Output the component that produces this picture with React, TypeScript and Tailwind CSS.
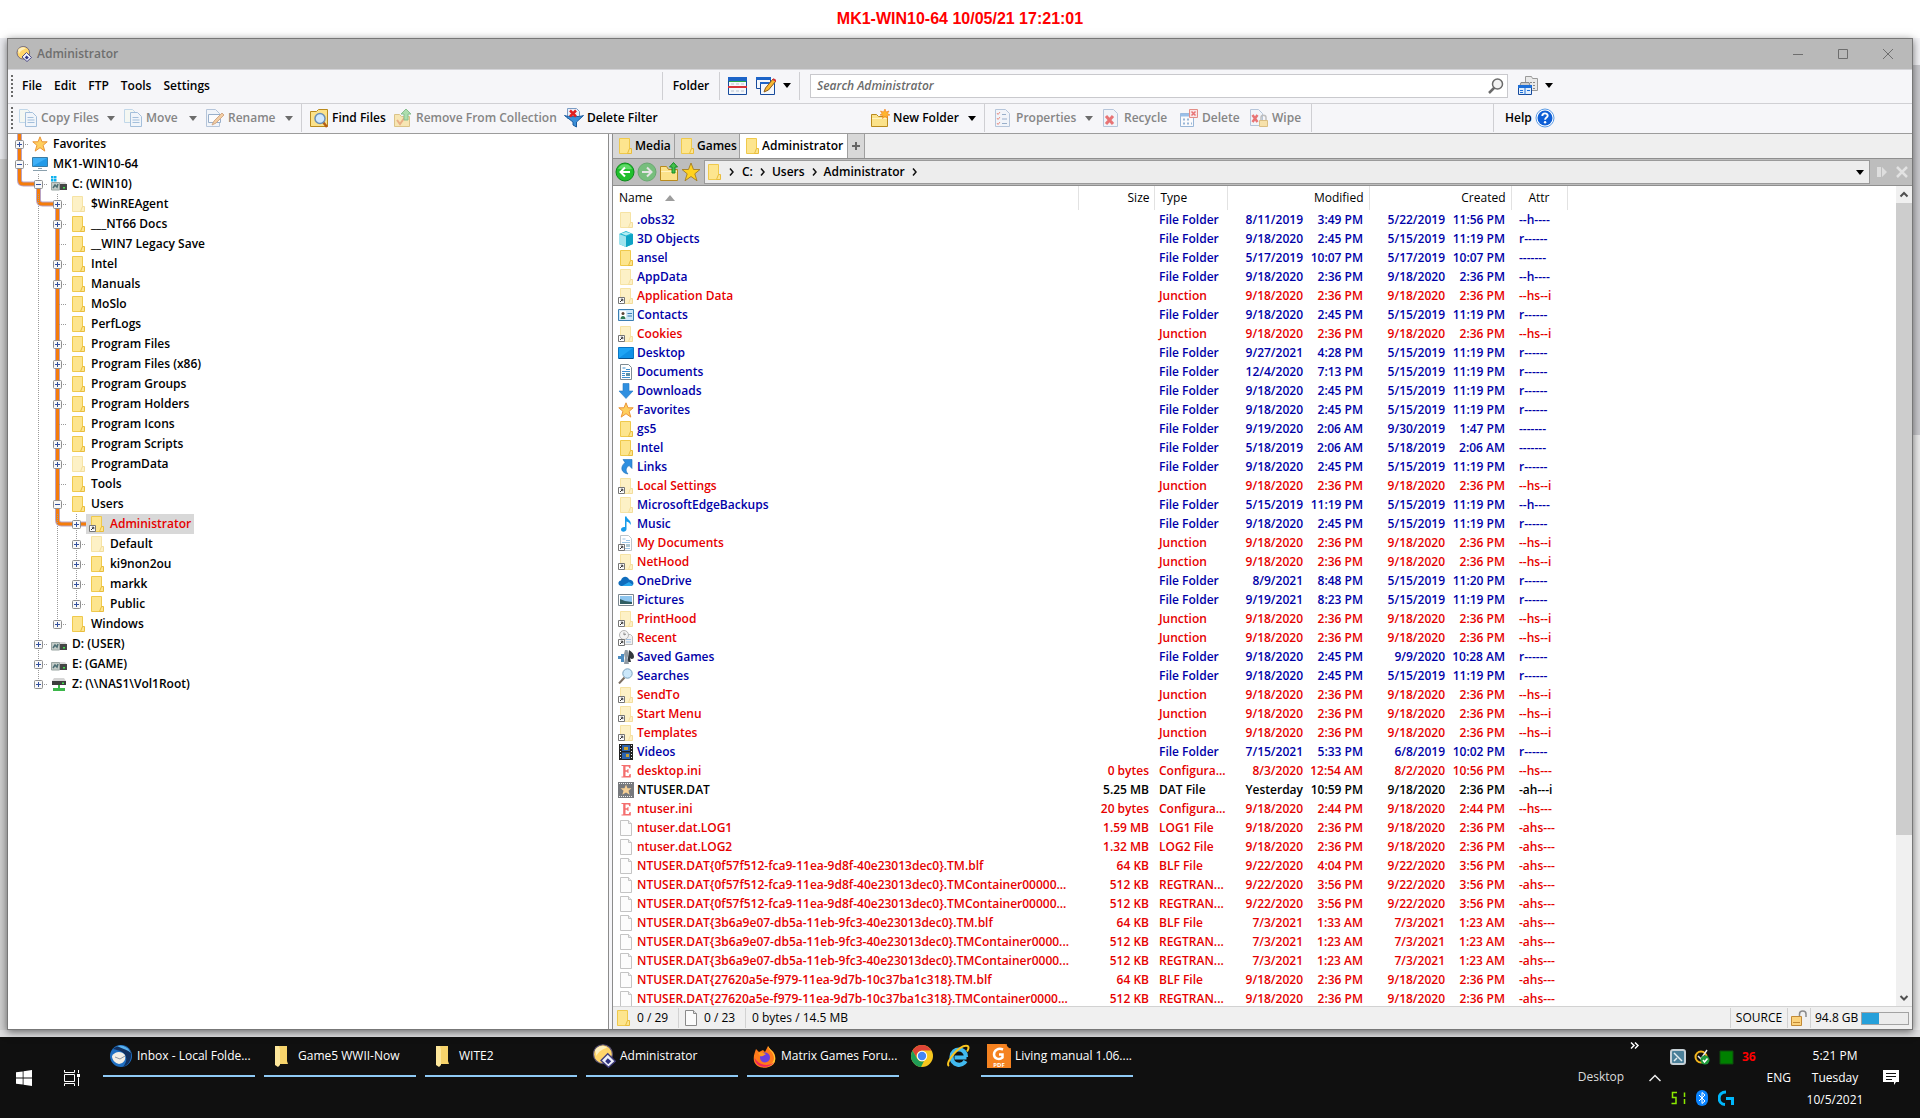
import React from 'react'

type IconProps = { className?: string }

function Svg({ size = 16, className = '', children }: { size?: number; className?: string; children: React.ReactNode }) {
  return (
    <svg width={size} height={size} viewBox={`0 0 ${size} ${size}`} className={`shrink-0 ${className}`} aria-hidden="true">
      {children}
    </svg>
  )
}

/* ---------- file and folder icons (16px) ---------- */

function Folder({ className }: IconProps) {
  return (
    <Svg className={className}>
      <path d="M2.5 .5h10v15h-10z" fill="#fde58e" stroke="#efc94c" />
      <path d="M12.5 10.5h2v5h-4z" fill="#fde58e" stroke="#e9bd3c" />
    </Svg>
  )
}

function LinkMark() {
  return (
    <>
      <path d="M.5 9.5h6v6h-6z" fill="#fff" stroke="#777" />
      <path d="M2 14l2.5-2.5M2.8 11.2h2v2" stroke="#333" fill="none" />
    </>
  )
}

function FolderLink({ faded = true }: { faded?: boolean }) {
  return (
    <Svg>
      <g opacity={faded ? 0.5 : 1}>
        <path d="M2.5 .5h10v15h-10z" fill="#fde58e" stroke="#efc94c" />
        <path d="M12.5 10.5h2v5h-4z" fill="#fde58e" stroke="#e9bd3c" />
      </g>
      <LinkMark />
    </Svg>
  )
}

function Page({ className }: IconProps) {
  return (
    <Svg className={className}>
      <path d="M2.5 .5h8l3 3v12h-11z" fill="#fbfbfb" stroke="#8a8a8a" />
      <path d="M10.5 .5v3h3" fill="#ddd" stroke="#8a8a8a" />
    </Svg>
  )
}

function Star() {
  return (
    <Svg>
      <path d="M8 .8l2 5h5.2l-4.1 3.5 1.7 5.8L8 11.7l-4.8 3.4 1.7-5.8L.8 5.8H6z" fill="#ffcf5e" stroke="#ea9538" />
    </Svg>
  )
}

function Monitor() {
  return (
    <Svg>
      <path d="M.5 1.5h15v9h-15z" fill="#3fb0f7" stroke="#3a7ca5" />
      <path d="M1 10L15 2v8z" fill="#239be8" />
      <path d="M6 12.5h4M1 14.5h14" stroke="#8aa0ad" />
    </Svg>
  )
}

function Drive({ system = false }: { system?: boolean }) {
  return (
    <Svg>
      {system && <path d="M0 0h2.5v2.5H0zM3 0h2.500v2.500H3zM0 3h2.500v2.500H0zM3 3h2.500v2.500H3z" fill="#11b2ee" />}
      <path d="M7 8l2-2h5l1.500 2z" fill="#d8d8d8" />
      <path d="M7 8h9v6H7z" fill="#454545" />
      <path d="M12 11h2v1.500h-2z" fill="#41e34b" />
      <path d="M.5 6.500h8v7.500h-8z" fill="#c4ccc8" stroke="#9aa5a2" />
      <path d="M2 12l2-3 2 2 1-3" stroke="#4d6e74" strokeWidth="1.500" fill="none" />
    </Svg>
  )
}

function NetDrive() {
  return (
    <Svg>
      <path d="M3 2h10l2 3H1z" fill="#d5d5d5" />
      <path d="M1 5h14v4H1z" fill="#3d3d3d" />
      <path d="M11 6.500h2v1.500h-2z" fill="#41e34b" />
      <path d="M7 9h2v3h5v3H2v-3h5z" fill="#3cb64a" />
    </Svg>
  )
}

function Cube() {
  return (
    <Svg>
      <path d="M1 3l7-3 7 3v10l-7 3-7-3z" fill="#1fb5cf" />
      <path d="M1 3l7 2.500V16l-7-3z" fill="#9fe3ee" />
      <path d="M8 5.500L15 3v10l-7 3z" fill="#0fa3c4" />
      <path d="M3 2.500L8 1l5 1.500-5 2z" fill="#b7edf3" />
    </Svg>
  )
}

function Card() {
  return (
    <Svg>
      <path d="M.5 2.500h15v11H.5z" fill="#cfe8f8" stroke="#3b7fb3" />
      <path d="M2 4h6v8H2z" fill="#fff" />
      <circle cx="5" cy="6.500" r="1.500" fill="#5a4636" />
      <path d="M2.500 12c0-4 5-4 5 0z" fill="#2f7a54" />
      <path d="M9.500 6.500H14M9.500 9H14" stroke="#3b7fb3" />
    </Svg>
  )
}

function DesktopPic() {
  return (
    <Svg>
      <path d="M.5 2.500h15v11H.5z" fill="#1ea4f5" stroke="#0b77c4" />
      <path d="M1 13L15 3v10z" fill="#1091e6" />
      <path d="M1 13.500h14" stroke="#0a4f8a" />
    </Svg>
  )
}

function DocPic() {
  return (
    <>
      <path d="M2.500 .5h8l3 3v12h-11z" fill="#fff" stroke="#7e8b93" />
      <path d="M4.500 4h3M8 5.500h4M4 7.500h8M4 9.500h3M4 11.500h3M4 13.500h8" stroke="#3d8fce" />
      <path d="M8 9h4v3H8z" fill="#5d91a8" />
    </>
  )
}

function DownArrow() {
  return (
    <Svg>
      <path d="M5 .5h6V8h4l-7 7.500L1 8h4z" fill="#2f8fe0" stroke="#2178c2" strokeWidth=".6" />
    </Svg>
  )
}

function LinksPic() {
  return (
    <Svg>
      <path d="M5 .5h9v9l-3-3c-3 2-4 5-1 8.500C3.500 14 1.500 8.500 7 3.500z" fill="#2f8fe0" stroke="#1f6fb5" strokeWidth=".6" />
    </Svg>
  )
}

function Note() {
  return (
    <Svg>
      <path d="M7 .5h1.500c.5 3 5.500 4 4 8.500-.5-2-2-3-4-3.500V13c0 3.500-5.500 3.500-5.500.8C3 11.500 5 10.600 7 11z" fill="#169bea" />
    </Svg>
  )
}

function Cloud() {
  return (
    <Svg>
      <path d="M3.500 13C-.5 13-.5 8 3 7.500 4 3 9.500 2.500 11 6.500c5 .2 6 5.500 2 6.500z" fill="#0f6cbd" />
      <path d="M4 13l7-4 4 3-2 1z" fill="#2aa8ee" />
    </Svg>
  )
}

function Picture() {
  return (
    <Svg>
      <path d="M.5 2.500h15v11H.5z" fill="#fff" stroke="#7c8790" />
      <path d="M2 4h12v8H2z" fill="#8ec6ef" />
      <path d="M2 7l5 2 7 1v2H2z" fill="#2f5d63" />
    </Svg>
  )
}

function Recent() {
  return (
    <Svg>
      <path d="M6.500 4.500h6l2 2v8h-8z" fill="#f1f1f1" stroke="#bbb" />
      <path d="M8 9.500h5M8 12h5" stroke="#9fc3e6" />
      <circle cx="6" cy="5" r="4.500" fill="#f3f3f3" stroke="#b5b5b5" />
      <path d="M6 2.500V5l2-1" stroke="#888" fill="none" />
      <LinkMark />
    </Svg>
  )
}

function SavedGames() {
  return (
    <Svg>
      <path d="M11 1c3 2 5 4 5 6.500 0 3-3 3-4 1.500l1 4H9.500z" fill="#33383d" />
      <path d="M0 7h3V5h3v8H3v-3H0z" fill="#4b8bc0" />
      <path d="M7 1h2.500l1 4-1 4 1.500 6H6l1-6-1-4z" fill="#8f9aa3" />
    </Svg>
  )
}

function Searches() {
  return (
    <Svg>
      <path d="M6.500 9.500L1 15.500" stroke="#7c6f63" strokeWidth="2" />
      <circle cx="9.500" cy="5.500" r="4.700" fill="#cbe7fa" stroke="#7ba1bd" />
    </Svg>
  )
}

function Film() {
  return (
    <Svg>
      <path d="M1 0h14v16H1z" fill="#222" />
      <path d="M4 1h8v6H4zM4 8.500h8V15H4z" fill="#2c63ae" />
      <path d="M6 3h4v3H6zM8 10h3v3H8z" fill="#c9a233" />
      <path d="M2.500 1v15M13.500 1v15" stroke="#eee" strokeDasharray="1 2" />
    </Svg>
  )
}

function DatFile() {
  return (
    <Svg>
      <path d="M0 0h16v16H0z" fill="#77797d" />
      <path d="M1 1.500h14M1 14.500h14" stroke="#eee" strokeDasharray="1 1" />
      <path d="M8 2.500l1.500 3.800h4l-3 2.500 1.200 4L8 10.500l-3.700 2.300 1.200-4-3-2.500h4z" fill="#f6cf94" />
    </Svg>
  )
}

function IniFile() {
  return (
    <Svg>
      <path d="M3.500 2h9v3.200h-1.200L10.500 3.500H7.500v3.800h1.700l.4-1.300h.9v4h-.9l-.4-1.300H7.500v4.300h3.200l1-2h1.100V14.500h-9.300v-1h1.700V3H3.500z" fill="#f46e6e" />
    </Svg>
  )
}

const icons: Record<string, React.ReactNode> = {
  folder: <Folder />,
  faded: <Folder className="opacity-50" />,
  link: <FolderLink />,
  cube: <Cube />,
  card: <Card />,
  desktop: <DesktopPic />,
  docs: <Svg><DocPic /></Svg>,
  docsLink: <Svg><g opacity=".5"><DocPic /></g><LinkMark /></Svg>,
  down: <DownArrow />,
  star: <Star />,
  links: <LinksPic />,
  note: <Note />,
  cloud: <Cloud />,
  picture: <Picture />,
  recent: <Recent />,
  games: <SavedGames />,
  search: <Searches />,
  film: <Film />,
  ini: <IniFile />,
  dat: <DatFile />,
  page: <Page className="opacity-50" />,
  monitor: <Monitor />,
  sysdrive: <Drive system />,
  drive: <Drive />,
  netdrive: <NetDrive />,
  current: <FolderLink faded={false} />,
}

/* ---------- toolbar icons (20px) ---------- */

function CopyIcon() {
  return (
    <Svg size={20} className="opacity-60">
      <path d="M1.500 1.500h8l3 3v10h-11z" fill="#f3f9ee" stroke="#9ec3e0" />
      <path d="M7.500 4.500h7l4 4v10h-11z" fill="#eef5fc" stroke="#6f9cc8" />
      <path d="M9.500 9.500h6M9.500 12h7M9.500 14.500h7" stroke="#6f9cc8" />
    </Svg>
  )
}

function RenameIcon() {
  return (
    <Svg size={20} className="opacity-60">
      <path d="M1.500 1.500h9l4 4v13h-13z" fill="#eef3fa" stroke="#8aa6c6" />
      <path d="M3.500 6.500h12v8h-12z" fill="#fff" stroke="#5c81ac" />
      <path d="M7 17l2-4 8-8 2 2-8 8z" fill="#f2b36b" stroke="#b9773e" />
    </Svg>
  )
}

function FindIcon() {
  return (
    <Svg size={20}>
      <path d="M1.500 3.500h6l2-2h9v17h-17z" fill="#fbe28a" stroke="#b98a1d" />
      <path d="M14 14l4 5" stroke="#b65f14" strokeWidth="2.500" />
      <circle cx="11" cy="10.500" r="5" fill="#cfe8ff" stroke="#6b8fb5" strokeWidth="1.500" />
    </Svg>
  )
}

function CollectionIcon() {
  return (
    <Svg size={20} className="opacity-60">
      <path d="M1.500 6.500h5l2 2h8v10h-15z" fill="#f9dc86" stroke="#caa23e" />
      <path d="M4 12l3 4 5-7" stroke="#e2803a" strokeWidth="2" fill="none" />
      <path d="M13 1l5 5h-3v6h-4V6H8z" fill="#7dcf7d" stroke="#3f9c4a" />
    </Svg>
  )
}

function FilterIcon() {
  return (
    <Svg size={20}>
      <path d="M3.500 .5h9l3 3v7h-12z" fill="#e9f0fa" stroke="#7b9cc4" />
      <path d="M.5 7.500c3 1.500 16 1.500 19 0l-7 6.500v5l-3.500-2v-3z" fill="#3c8fd8" stroke="#1b5b9e" />
      <path d="M6 2.500l6 6M12 2.500l-6 6" stroke="#e01f1f" strokeWidth="2.500" />
    </Svg>
  )
}

function NewFolderIcon() {
  return (
    <Svg size={20}>
      <path d="M1.500 6.500h5l2 2h9v10h-16z" fill="#fbe28a" stroke="#b98a1d" />
      <path d="M2 10.500h15" stroke="#fff3c0" />
      <path d="M15 1l1 3 3-1-1.500 2.500L20 7l-3 .5.500 3-2.500-2-2.500 2 .5-3-3-.5L12 5.500 10.500 3l3 1z" fill="#ffb52e" stroke="#ee7c1a" strokeWidth=".6" />
    </Svg>
  )
}

function PropertiesIcon() {
  return (
    <Svg size={20} className="opacity-60">
      <path d="M2.500 1.500h10l4 4v13h-14z" fill="#eef3fa" stroke="#8aa6c6" />
      <path d="M4 5l1 1.500L7 4M4 10l1 1.500L7 9M4 15l1 1.500L7 14" stroke="#e2503a" fill="none" />
      <path d="M9 6.500h4M9 11h5M9 15.500h5" stroke="#5c81ac" />
    </Svg>
  )
}

function RecycleIcon() {
  return (
    <Svg size={20} className="opacity-60">
      <path d="M2.500 1.500h10l4 4v13h-14z" fill="#eef3fa" stroke="#8aa6c6" />
      <path d="M5 8l7 8M12 8l-7 8" stroke="#e01f1f" strokeWidth="3" />
    </Svg>
  )
}

function DeleteIcon() {
  return (
    <Svg size={20} className="opacity-60">
      <path d="M1.500 5.500h13v13h-13z" fill="#fff" stroke="#5d8cc2" />
      <path d="M1.500 5.500h13v3h-13z" fill="#5d9be0" />
      <path d="M4 11.500h2M8 11.500h2M4 15.500h2M8 15.500h2M12 15.500h1" stroke="#5d8cc2" strokeWidth="2" />
      <path d="M10.500 1.500h8v8h-8z" fill="#fbdcdc" stroke="#d84a3c" />
      <path d="M12.500 3.500l4 4M16.500 3.500l-4 4" stroke="#e01f1f" strokeWidth="1.500" />
    </Svg>
  )
}

function WipeIcon() {
  return (
    <Svg size={20} className="opacity-60">
      <path d="M1.500 1.500h8l4 4v12h-12z" fill="#eef3fa" stroke="#8aa6c6" />
      <path d="M3.500 7l5 7M8.500 7l-5 7" stroke="#e01f1f" strokeWidth="2.500" />
      <path d="M12 12V9.500c0-3 5-3 5 0V12" fill="none" stroke="#999" strokeWidth="1.500" />
      <path d="M10.500 12.500h8v6h-8z" fill="#f8d477" stroke="#c99a35" />
    </Svg>
  )
}

function HelpIcon() {
  return (
    <Svg size={20}>
      <circle cx="10" cy="10" r="9" fill="#fff" stroke="#5a9be6" />
      <circle cx="10" cy="10" r="7.500" fill="#0f5fd6" />
      <path d="M7.300 8c0-3.500 5.400-3.500 5.400-.3 0 1.800-2.600 1.900-2.600 4" stroke="#fff" strokeWidth="1.900" fill="none" />
      <circle cx="10.100" cy="14.200" r="1.200" fill="#fff" />
    </Svg>
  )
}

function PanesIcon() {
  return (
    <Svg size={20}>
      <path d="M.5 1.500h18v17H.5z" fill="#f4f7fb" stroke="#174a9c" />
      <path d="M0 1h19v4H0z" fill="#1d64c8" />
      <path d="M1 5.500h17" stroke="#2aa648" />
      <path d="M0 11h19" stroke="#d8323a" strokeWidth="2" />
      <path d="M3 8h3M8 8h3M13 8h3M3 15h3M8 15h3M13 15h3" stroke="#b9c3d1" />
    </Svg>
  )
}

function StylesIcon() {
  return (
    <Svg size={20}>
      <path d="M.5 1.500h14v11H.5z" fill="#f4f7fb" stroke="#174a9c" />
      <path d="M0 1h15v3H0z" fill="#1d64c8" />
      <path d="M4.500 6.500h14v12h-14z" fill="#f4f7fb" stroke="#174a9c" />
      <path d="M4 6h15v2H4z" fill="#1d64c8" />
      <path d="M8 16l1.500-4L17 3l3 2-7.500 9z" fill="#f7b733" stroke="#8a5a1a" />
      <path d="M17 3l3 2" stroke="#d8323a" strokeWidth="2" />
    </Svg>
  )
}

function ListerIcon() {
  return (
    <Svg size={20}>
      <path d="M7.500 .5h6l1 2h5v12h-12z" fill="#e9e9e9" stroke="#9a9a9a" />
      <path d="M12 6.500h5M12 9.500h5M12 12.500h5" stroke="#888" strokeDasharray="2 1" />
      <path d="M2 9.500l1-3h8l1 3" fill="#ccc" stroke="#888" />
      <path d="M.5 9.500h13v9H.5z" fill="#e3effc" stroke="#174a9c" />
      <path d="M0 9h14v3H0z" fill="#1d6fd8" />
      <path d="M7 12v7M2 14.500h3M9 14.500h3M2 16.500h3" stroke="#1d6fd8" />
    </Svg>
  )
}

function Opus({ size = 16 }: { size?: number }) {
  return (
    <svg width={size} height={size} viewBox="0 0 16 16" className="shrink-0" aria-hidden="true">
      <circle cx="7.300" cy="6.800" r="6.300" fill="#ffd56a" stroke="#5b5478" strokeWidth=".8" />
      <path d="M2 4c2-3 6-3.500 8-1.500C8 3 4 5 3 8z" fill="#fff0bd" />
      <path d="M10.500 6.500l5 5-4.500 4-5-4.500z" fill="#eef0fa" stroke="#3f3c7c" strokeWidth=".9" />
      <path d="M10.500 9.500l2.300 2-2 2-2-2z" fill="#2e3180" />
    </svg>
  )
}

function Arrow({ className = 'text-black' }: IconProps) {
  return (
    <svg width="8" height="5" viewBox="0 0 8 5" className={className} aria-hidden="true">
      <path d="M0 0h8L4 5z" fill="currentColor" />
    </svg>
  )
}

function Grip() {
  return <span className="h-[22px] w-[2px] shrink-0 border-l-2 border-dotted border-[#6a6a6a]" />
}

function Sep() {
  return <span className="h-7 w-px shrink-0 bg-[#cfcfd3]" />
}

type ToolProps = { icon: React.ReactNode; label: string; width: string; arrow?: boolean; off?: boolean }

function Tool({ icon, label, width, arrow, off }: ToolProps) {
  return (
    <div className={`flex shrink-0 items-center ${width}`}>
      <button disabled={off} className={`flex flex-1 items-center gap-[3px] whitespace-nowrap ${off ? 'text-[#858585]' : 'text-black'}`}>
        {icon}
        {label}
      </button>
      {arrow && (
        <button aria-label={`${label} options`} className="mr-2">
          <Arrow className={off ? 'text-[#6c6c6c]' : 'text-black'} />
        </button>
      )}
    </div>
  )
}

/* ---------- folder tree ---------- */

// Each guide string is one 19px column. v/t/b dotted vertical, h dotted branch,
// O/B thick path, C thick corner, R thick branch, + and - the expander box.
function Guide({ code }: { code: string }) {
  const has = (c: string) => code.includes(c)
  const thick = (d: string) => (
    <>
      <path d={d} fill="none" stroke="#b9a3c4" strokeWidth="5" />
      <path d={d} fill="none" stroke="#f57c0a" strokeWidth="3" />
    </>
  )
  return (
    <svg width="19" height="20" viewBox="0 0 19 20" className="shrink-0" aria-hidden="true">
      {has('O') && thick('M9.500 0V20')}
      {has('B') && thick('M9.500 10V20')}
      {has('C') && thick('M9.500 0V6Q9.500 10 13.500 10H19')}
      {has('R') && thick('M0 10H9')}
      {has('r') && thick('M9 10H19')}
      <g stroke="#9a9a9a" strokeDasharray="1 1">
        {has('v') && <path d="M9.500 0V20" />}
        {has('t') && <path d="M9.500 0V10" />}
        {has('b') && <path d="M9.500 10V20" />}
        {has('h') && <path d="M11 10.500H19" />}
      </g>
      {(has('+') || has('-')) && (
        <>
          <rect x="5.500" y="6.500" width="8" height="8" rx="1" fill="#f8f8f8" stroke="#8f8f8f" />
          <path d={has('+') ? 'M7 10.500h5M9.500 8v5' : 'M7 10.500h5'} stroke="#33509e" />
        </>
      )}
    </svg>
  )
}

const tree: [string[], string, string][] = [
  [['Oh+'], 'star', 'Favorites'],
  [['Oh-'], 'monitor', 'MK1-WIN10-64'],
  [['C', 'RtBh-'], 'sysdrive', 'C: (WIN10)'],
  [['', 'Cv', 'RtBh+'], 'faded', '$WinREAgent'],
  [['', 'v', 'Oh+'], 'folder', '___NT66 Docs'],
  [['', 'v', 'Oh'], 'folder', '__WIN7 Legacy Save'],
  [['', 'v', 'Oh+'], 'folder', 'Intel'],
  [['', 'v', 'Oh+'], 'folder', 'Manuals'],
  [['', 'v', 'Oh'], 'folder', 'MoSlo'],
  [['', 'v', 'Oh'], 'folder', 'PerfLogs'],
  [['', 'v', 'Oh+'], 'folder', 'Program Files'],
  [['', 'v', 'Oh+'], 'folder', 'Program Files (x86)'],
  [['', 'v', 'Oh+'], 'folder', 'Program Groups'],
  [['', 'v', 'Oh+'], 'folder', 'Program Holders'],
  [['', 'v', 'Oh'], 'folder', 'Program Icons'],
  [['', 'v', 'Oh+'], 'folder', 'Program Scripts'],
  [['', 'v', 'Oh+'], 'faded', 'ProgramData'],
  [['', 'v', 'Oh'], 'folder', 'Tools'],
  [['', 'v', 'Oh-'], 'folder', 'Users'],
  [['', 'v', 'Cv', 'Rrv+'], 'current', 'Administrator'],
  [['', 'v', 'v', 'vh+'], 'faded', 'Default'],
  [['', 'v', 'v', 'vh+'], 'folder', 'ki9non2ou'],
  [['', 'v', 'v', 'vh+'], 'folder', 'markk'],
  [['', 'v', 'v', 'th+'], 'folder', 'Public'],
  [['', 'v', 'th+'], 'folder', 'Windows'],
  [['', 'vh+'], 'drive', 'D: (USER)'],
  [['', 'vh+'], 'drive', 'E: (GAME)'],
  [['', 'th+'], 'netdrive', 'Z: (\\\\NAS1\\Vol1Root)'],
]

function FolderTree() {
  return (
    <ul className="w-[601px] shrink-0 overflow-hidden border-r border-[#8c8c8c] bg-white pl-[2px]">
      {tree.map(([guides, icon, label]) => (
        <li key={label} className="flex h-5 items-center whitespace-nowrap">
          {guides.map((code, i) => (
            <Guide key={i} code={code} />
          ))}
          <button
            className={`flex h-5 items-center gap-[5px] pr-[3px] pl-[3px] ${icon === 'current' ? 'bg-[#d8d8d8] text-[#e60000]' : 'text-black'}`}
          >
            {icons[icon]}
            {label}
          </button>
        </li>
      ))}
    </ul>
  )
}

/* ---------- file list ---------- */

// icon, name, size, type, modified date, time, created date, time, attributes
const files = `
faded|.obs32||File Folder|8/11/2019|3:49 PM|5/22/2019|11:56 PM|--h----
cube|3D Objects||File Folder|9/18/2020|2:45 PM|5/15/2019|11:19 PM|r------
folder|ansel||File Folder|5/17/2019|10:07 PM|5/17/2019|10:07 PM|-------
faded|AppData||File Folder|9/18/2020|2:36 PM|9/18/2020|2:36 PM|--h----
link|Application Data||Junction|9/18/2020|2:36 PM|9/18/2020|2:36 PM|--hs--i
card|Contacts||File Folder|9/18/2020|2:45 PM|5/15/2019|11:19 PM|r------
link|Cookies||Junction|9/18/2020|2:36 PM|9/18/2020|2:36 PM|--hs--i
desktop|Desktop||File Folder|9/27/2021|4:28 PM|5/15/2019|11:19 PM|r------
docs|Documents||File Folder|12/4/2020|7:13 PM|5/15/2019|11:19 PM|r------
down|Downloads||File Folder|9/18/2020|2:45 PM|5/15/2019|11:19 PM|r------
star|Favorites||File Folder|9/18/2020|2:45 PM|5/15/2019|11:19 PM|r------
folder|gs5||File Folder|9/19/2020|2:06 AM|9/30/2019|1:47 PM|-------
folder|Intel||File Folder|5/18/2019|2:06 AM|5/18/2019|2:06 AM|-------
links|Links||File Folder|9/18/2020|2:45 PM|5/15/2019|11:19 PM|r------
link|Local Settings||Junction|9/18/2020|2:36 PM|9/18/2020|2:36 PM|--hs--i
faded|MicrosoftEdgeBackups||File Folder|5/15/2019|11:19 PM|5/15/2019|11:19 PM|--h----
note|Music||File Folder|9/18/2020|2:45 PM|5/15/2019|11:19 PM|r------
docsLink|My Documents||Junction|9/18/2020|2:36 PM|9/18/2020|2:36 PM|--hs--i
link|NetHood||Junction|9/18/2020|2:36 PM|9/18/2020|2:36 PM|--hs--i
cloud|OneDrive||File Folder|8/9/2021|8:48 PM|5/15/2019|11:20 PM|r------
picture|Pictures||File Folder|9/19/2021|8:23 PM|5/15/2019|11:19 PM|r------
link|PrintHood||Junction|9/18/2020|2:36 PM|9/18/2020|2:36 PM|--hs--i
recent|Recent||Junction|9/18/2020|2:36 PM|9/18/2020|2:36 PM|--hs--i
games|Saved Games||File Folder|9/18/2020|2:45 PM|9/9/2020|10:28 AM|r------
search|Searches||File Folder|9/18/2020|2:45 PM|5/15/2019|11:19 PM|r------
link|SendTo||Junction|9/18/2020|2:36 PM|9/18/2020|2:36 PM|--hs--i
link|Start Menu||Junction|9/18/2020|2:36 PM|9/18/2020|2:36 PM|--hs--i
link|Templates||Junction|9/18/2020|2:36 PM|9/18/2020|2:36 PM|--hs--i
film|Videos||File Folder|7/15/2021|5:33 PM|6/8/2019|10:02 PM|r------
ini|desktop.ini|0 bytes|Configura...|8/3/2020|12:54 AM|8/2/2020|10:56 PM|--hs---
dat|NTUSER.DAT|5.25 MB|DAT File|Yesterday|10:59 PM|9/18/2020|2:36 PM|-ah---i
ini|ntuser.ini|20 bytes|Configura...|9/18/2020|2:44 PM|9/18/2020|2:44 PM|--hs---
page|ntuser.dat.LOG1|1.59 MB|LOG1 File|9/18/2020|2:36 PM|9/18/2020|2:36 PM|-ahs---
page|ntuser.dat.LOG2|1.32 MB|LOG2 File|9/18/2020|2:36 PM|9/18/2020|2:36 PM|-ahs---
page|NTUSER.DAT{0f57f512-fca9-11ea-9d8f-40e23013dec0}.TM.blf|64 KB|BLF File|9/22/2020|4:04 PM|9/22/2020|3:56 PM|-ahs---
page|NTUSER.DAT{0f57f512-fca9-11ea-9d8f-40e23013dec0}.TMContainer00000...|512 KB|REGTRAN...|9/22/2020|3:56 PM|9/22/2020|3:56 PM|-ahs---
page|NTUSER.DAT{0f57f512-fca9-11ea-9d8f-40e23013dec0}.TMContainer00000...|512 KB|REGTRAN...|9/22/2020|3:56 PM|9/22/2020|3:56 PM|-ahs---
page|NTUSER.DAT{3b6a9e07-db5a-11eb-9fc3-40e23013dec0}.TM.blf|64 KB|BLF File|7/3/2021|1:33 AM|7/3/2021|1:23 AM|-ahs---
page|NTUSER.DAT{3b6a9e07-db5a-11eb-9fc3-40e23013dec0}.TMContainer0000...|512 KB|REGTRAN...|7/3/2021|1:23 AM|7/3/2021|1:23 AM|-ahs---
page|NTUSER.DAT{3b6a9e07-db5a-11eb-9fc3-40e23013dec0}.TMContainer0000...|512 KB|REGTRAN...|7/3/2021|1:23 AM|7/3/2021|1:23 AM|-ahs---
page|NTUSER.DAT{27620a5e-f979-11ea-9d7b-10c37ba1c318}.TM.blf|64 KB|BLF File|9/18/2020|2:36 PM|9/18/2020|2:36 PM|-ahs---
page|NTUSER.DAT{27620a5e-f979-11ea-9d7b-10c37ba1c318}.TMContainer0000...|512 KB|REGTRAN...|9/18/2020|2:36 PM|9/18/2020|2:36 PM|-ahs---
`
  .trim()
  .split('\n')
  .map((line) => line.split('|'))

function rowColor(name: string, type: string) {
  if (type === 'File Folder') return 'text-[#0000a8]'
  if (name === 'NTUSER.DAT') return 'text-black'
  return 'text-[#e60000]'
}

function DateCell({ date, time }: { date: string; time: string }) {
  return (
    <td className="p-0 pr-[6px]">
      <div className="flex justify-end">
        <span>{date}</span>
        <span className="w-[60px] text-right">{time}</span>
      </div>
    </td>
  )
}

function FileList() {
  const th = 'border-r border-[#e2e2e2] p-0 font-normal'
  return (
    <div className="flex min-h-0 flex-1 bg-white">
      <div className="min-w-0 flex-1 overflow-hidden">
        <table className="w-full table-fixed border-collapse whitespace-nowrap">
          <colgroup>
            <col className="w-[465px]" />
            <col className="w-[76px]" />
            <col className="w-[73px]" />
            <col className="w-[142px]" />
            <col className="w-[142px]" />
            <col className="w-[56px]" />
            <col />
          </colgroup>
          <thead>
            <tr className="h-6 text-black">
              <th className={`${th} pl-[6px] text-left`}>
                <span className="flex items-center gap-3">
                  Name
                  <svg width="10" height="6" viewBox="0 0 10 6" aria-hidden="true">
                    <path d="M0 6h10L5 0z" fill="#9d9d9d" />
                  </svg>
                </span>
              </th>
              <th className={`${th} pr-1 text-right`}>Size</th>
              <th className={`${th} pl-[6px] text-left`}>Type</th>
              <th className={`${th} pr-[5px] text-right`}>Modified</th>
              <th className={`${th} pr-[5px] text-right`}>Created</th>
              <th className={`${th} text-center`}>Attr</th>
              <th className="p-0" aria-label="Filler" />
            </tr>
          </thead>
          <tbody>
            {files.map(([icon, name, size, type, mDate, mTime, cDate, cTime, attr], i) => (
              <tr key={i} className={`h-[19px] ${rowColor(name, type)}`}>
                <td className="p-0">
                  <div className="flex h-[19px] items-center gap-[3px] overflow-hidden pl-[5px]">
                    {icons[icon]}
                    {name}
                  </div>
                </td>
                <td className="p-0 pr-[5px] text-right">{size}</td>
                <td className="overflow-hidden p-0 pl-[5px]">{type}</td>
                <DateCell date={mDate} time={mTime} />
                <DateCell date={cDate} time={cTime} />
                <td className="p-0 pl-2">{attr}</td>
                <td className="p-0" />
              </tr>
            ))}
          </tbody>
        </table>
      </div>
      <div className="flex w-4 shrink-0 flex-col items-center bg-[#f0f0f0]">
        <svg width="16" height="17" viewBox="0 0 16 17" aria-hidden="true">
          <path d="M4.500 10.500L8 7l3.500 3.500" fill="none" stroke="#505050" strokeWidth="2" />
        </svg>
        <div className="w-full grow-[633] bg-[#cdcdcd]" />
        <div className="w-full grow-[154]" />
        <svg width="16" height="17" viewBox="0 0 16 17" aria-hidden="true">
          <path d="M4.500 7L8 10.500 11.500 7" fill="none" stroke="#505050" strokeWidth="2" />
        </svg>
      </div>
    </div>
  )
}

/* ---------- window bars ---------- */

function TitleBar() {
  return (
    <div className="flex h-[30px] shrink-0 items-center bg-[#b9b9b9] pr-[18px] pb-px pl-2 text-[#6e6e6e]">
      <Opus />
      <h1 className="ml-[5px] flex-1">Administrator</h1>
      <div className="flex gap-[33px]">
        <button aria-label="Minimize">
          <Svg size={12}><path d="M1 6.500h10" stroke="#6e6e6e" /></Svg>
        </button>
        <button aria-label="Maximize">
          <Svg size={12}><path d="M1.500 1.500h9v9h-9z" fill="none" stroke="#6e6e6e" /></Svg>
        </button>
        <button aria-label="Close">
          <Svg size={12}><path d="M1 1l10 10M11 1L1 11" stroke="#6e6e6e" /></Svg>
        </button>
      </div>
    </div>
  )
}

function MenuBar() {
  return (
    <div className="flex h-[34px] shrink-0 items-center border-t border-[#d4d4d8] bg-[#f6f6f9] pb-[2px] pl-[3px] text-black">
      <div className="flex w-[651px] shrink-0 items-center">
        <Grip />
        <nav className="ml-[9px] flex gap-3">
          <button>File</button>
          <button>Edit</button>
          <button>FTP</button>
          <button>Tools</button>
          <button>Settings</button>
        </nav>
      </div>
      <Sep />
      <button className="w-14">Folder</button>
      <Sep />
      <button aria-label="Dual display" className="ml-2">
        <PanesIcon />
      </button>
      <button aria-label="Styles" className="ml-2 flex items-center gap-[7px]">
        <StylesIcon />
        <Arrow />
      </button>
      <span className="w-2" />
      <Sep />
      <label className="ml-[10px] flex h-6 w-[698px] items-center border border-[#c9c9cd] bg-white pr-[3px] pl-[6px]">
        <input aria-label="Search" placeholder="Search Administrator" className="min-w-0 flex-1 italic outline-none placeholder:text-[#6b6b6b]" />
        <Svg>
          <path d="M6.500 9.500L1 15" stroke="#6a6a6a" strokeWidth="2.500" />
          <circle cx="9.500" cy="6" r="5" fill="#f3f3f3" stroke="#6a6a6a" strokeWidth="1.500" />
        </Svg>
      </label>
      <button aria-label="Listers" className="ml-[10px] flex items-center gap-[7px]">
        <ListerIcon />
        <Arrow />
      </button>
    </div>
  )
}

function ToolBar() {
  return (
    <div className="flex h-[31px] shrink-0 items-center border-t border-b border-t-[#d0d0d4] border-b-[#9c9c9c] bg-[#f6f6f9] pb-px pl-[3px]">
      <div className="flex w-[859px] shrink-0 items-center">
        <Grip />
        <span className="w-[5px]" />
        <Tool icon={<CopyIcon />} label="Copy Files" width="w-[105px]" arrow off />
        <Tool icon={<CopyIcon />} label="Move" width="w-[82px]" arrow off />
        <Tool icon={<RenameIcon />} label="Rename" width="w-[96px]" arrow off />
        <Sep />
        <span className="w-[7px]" />
        <Tool icon={<FindIcon />} label="Find Files" width="w-[84px]" />
        <Tool icon={<CollectionIcon />} label="Remove From Collection" width="w-[171px]" off />
        <Tool icon={<FilterIcon />} label="Delete Filter" width="w-[100px]" />
      </div>
      <Tool icon={<NewFolderIcon />} label="New Folder" width="w-[114px]" arrow />
      <Sep />
      <span className="w-2" />
      <Tool icon={<PropertiesIcon />} label="Properties" width="w-[108px]" arrow off />
      <Tool icon={<RecycleIcon />} label="Recycle" width="w-[78px]" off />
      <Tool icon={<DeleteIcon />} label="Delete" width="w-[70px]" off />
      <Tool icon={<WipeIcon />} label="Wipe" width="w-[62px]" off />
      <Sep />
      <span className="w-[181px]" />
      <Sep />
      <button className="ml-[11px] flex items-center gap-[3px] text-black">
        Help
        <HelpIcon />
      </button>
    </div>
  )
}

function Tabs() {
  const tab = 'flex h-full items-center gap-[2px] border-r border-[#9f9f9f] pl-1'
  return (
    <div className="flex h-[25px] shrink-0 border-b border-[#8f8f8f] bg-[#efefef] text-black">
      <button className={`${tab} w-[62px] bg-[#d8d8d8]`}><Folder />Media</button>
      <button className={`${tab} w-[65px] bg-[#d8d8d8]`}><Folder />Games</button>
      <button className={`${tab} w-[108px] bg-white`}><Folder />Administrator</button>
      <button aria-label="New tab" className="flex h-full w-[17px] items-center justify-center border-r border-[#9f9f9f] bg-[#d8d8d8]">
        <Svg size={10}><path d="M5 1v8M1 5h8" stroke="#666" strokeWidth="2" /></Svg>
      </button>
    </div>
  )
}

function Crumb() {
  return (
    <svg width="5" height="8" viewBox="0 0 5 8" aria-hidden="true">
      <path d="M1 .5L4 4 1 7.500" fill="none" stroke="#111" strokeWidth="1.500" />
    </svg>
  )
}

function PathBar() {
  return (
    <div className="flex h-[27px] shrink-0 items-center border-b border-[#8f8f8f] bg-[#bdbdbd] pl-[2px] text-black">
      <button aria-label="Back">
        <Svg size={20}>
          <circle cx="10" cy="10" r="9" fill="#1fbf2d" stroke="#0c8a1a" />
          <path d="M3 7a7.500 7.500 0 0 1 14 0c-4 1-8-1-14 0z" fill="#7be682" opacity=".7" />
          <path d="M15 10H6M10 5.500L5.500 10l4.500 4.500" fill="none" stroke="#fff" strokeWidth="2" />
        </Svg>
      </button>
      <button aria-label="Forward" className="ml-[2px] opacity-60">
        <Svg size={20}>
          <circle cx="10" cy="10" r="9" fill="#49c053" stroke="#349a40" />
          <path d="M5 10h9M10 5.500l4.500 4.500-4.500 4.500" fill="none" stroke="#fff" strokeWidth="2" />
        </Svg>
      </button>
      <button aria-label="Up" className="ml-[2px]">
        <Svg size={20}>
          <path d="M1.500 4.500h6l2 3h9v11h-17z" fill="#fbe28a" stroke="#b98a1d" />
          <path d="M2 9.500h16" stroke="#fff3c0" />
          <path d="M14.500 .5l4 4.500h-2.500v6h-3V5h-2.500z" fill="#43c04b" stroke="#148a24" />
        </Svg>
      </button>
      <button aria-label="Favorites" className="ml-[2px]">
        <Svg size={20}>
          <path d="M10 1l2.500 6.500H19l-5.200 4.300 2.200 7L10 14.500l-6 4.300 2.200-7L1 7.500h6.500z" fill="#ffd21f" stroke="#a8842a" />
        </Svg>
      </button>
      <nav aria-label="Path" className="ml-[3px] flex h-6 flex-1 items-center gap-[7px] border border-[#9a9a9a] bg-[#ededed] px-px">
        <Folder />
        <Crumb />
        <a href="#c" className="ml-[1px]">C:</a>
        <Crumb />
        <a href="#users">Users</a>
        <Crumb />
        <a href="#administrator">Administrator</a>
        <Crumb />
        <button aria-label="Path history" className="mr-1 ml-auto"><Arrow /></button>
      </nav>
      <div className="flex w-[42px] items-center justify-center gap-2 pl-[1px]">
        <Svg size={12}><path d="M1 1h4v10H1zM6 1l5 5-5 5z" fill="#dedede" /></Svg>
        <button aria-label="Close pane">
          <Svg size={12}><path d="M1 1l10 10M11 1L1 11" stroke="#e2e2e2" strokeWidth="2.500" /></Svg>
        </button>
      </div>
    </div>
  )
}

function StatusBar() {
  const sep = <span className="h-5 w-px bg-[#d2d2d2]" />
  return (
    <div className="flex h-[23px] shrink-0 items-center border-t border-[#d2d2d2] bg-[#f0f0f0] pr-[3px] pl-[2px] font-normal whitespace-nowrap text-black">
      <Folder />
      <span className="w-[47px] pl-[6px]">0 / 29</span>
      {sep}
      <span className="w-1" />
      <Page />
      <span className="w-[46px] pl-[5px]">0 / 23</span>
      {sep}
      <span className="flex-1 pl-[6px]">0 bytes / 14.5 MB</span>
      {sep}
      <span className="w-14 text-center">SOURCE</span>
      {sep}
      <span className="flex w-[22px] justify-center">
        <Svg>
          <path d="M8.500 7V4c0-4 6.500-4 6.500 0v3" fill="none" stroke="#8b8b8b" strokeWidth="1.500" />
          <path d="M.5 6.500h10v9H.5z" fill="#fbd27c" stroke="#c28a36" />
          <path d="M2 12.500h7" stroke="#c28a36" />
        </Svg>
      </span>
      {sep}
      <span className="w-[50px] pl-1">94.8 GB</span>
      <div className="h-[13px] w-12 border border-[#a3a3a3] bg-[#ececec]">
        <div className="h-full bg-[#26a0da]" style={{ width: '37%' }} />
      </div>
    </div>
  )
}

/* ---------- taskbar ---------- */

function TaskFolder() {
  return (
    <Svg size={24}>
      <path d="M9 2h8v15l1 3H8z" fill="#f6d36b" />
      <path d="M5 2h4l1 4v15l-2 2-3-2z" fill="#fde79b" />
    </Svg>
  )
}

function Thunderbird() {
  return (
    <Svg size={24}>
      <circle cx="12" cy="12" r="11" fill="#1f6fc2" />
      <path d="M4 5c5-5 15-4 18 3 1 7-2 13-8 15 5-6 4-12-1-15-3-2-6-2-9-3z" fill="#12305e" />
      <path d="M3 12c3-5 10-5 13-1 1 5-1 8-6 9-4-1-7-4-7-8z" fill="#f3efe6" />
      <path d="M6 13l5 2 5-3" stroke="#8c95a3" fill="none" />
      <path d="M8 2c5-2 12 1 14 7-3-3-8-4-14-7z" fill="#58b1ef" />
    </Svg>
  )
}

function Firefox() {
  return (
    <Svg size={24}>
      <path d="M3 5l3 3 4-2 2 2 3-6 2 3c5 3 6 8 5 12-2 9-19 9-21 0C0 12 2 8 3 5z" fill="#ff7a1a" />
      <path d="M15 2c0 4 6 6 6 12 0 4-3 7-7 8 6 1 9-4 8-9-.5-5-5-7-7-11z" fill="#ffcf33" />
      <path d="M1.500 14c1 11 16 11 20 4-5 4-14 5-20-4z" fill="#f0265a" />
      <circle cx="12" cy="13.500" r="5" fill="#6a3fe0" />
      <path d="M5 9c3-2 5 0 8 1-2 1-3 3-6 2z" fill="#ff9a1f" />
    </Svg>
  )
}

function Chrome() {
  return (
    <Svg size={24}>
      <circle cx="12" cy="12" r="11" fill="#f7c71e" />
      <path d="M2.500 6.500A11 11 0 0 1 21.500 6.500H12a5.500 5.500 0 0 0-4.800 8.300z" fill="#de4437" />
      <path d="M2.500 6.500l4.700 8.300A5.500 5.500 0 0 0 14 17l-3 6A11 11 0 0 1 2.500 6.500z" fill="#1f9d57" />
      <circle cx="12" cy="12" r="5.200" fill="#fff" />
      <circle cx="12" cy="12" r="4.200" fill="#4486f4" />
    </Svg>
  )
}

function Explorer() {
  return (
    <Svg size={24}>
      <path d="M20.500 13.500H8.500M20 13c0-10-14-10-14.500 0 .5 9 11 10 14 4" fill="none" stroke="#41b9ef" strokeWidth="4.200" />
      <path d="M3 22C-2 19 14 0 21.500 2c2 1 .5 4-.5 5.500" fill="none" stroke="#f9c51e" strokeWidth="2" />
    </Svg>
  )
}

function Foxit() {
  return (
    <Svg size={24}>
      <path d="M0 0h18l6 6v18H0z" fill="#f58220" />
      <path d="M19 0v5h5" fill="none" stroke="#f58220" strokeWidth="1.500" />
      <path d="M16 5.500c-5-2-9 1-9 5s5 6 8.500 3v-3H12" fill="none" stroke="#fff" strokeWidth="2.500" />
      <text x="12" y="23" textAnchor="middle" fontSize="6" fontWeight="700" fill="#fff">PDF</text>
    </Svg>
  )
}

function Task({ icon, label }: { icon: React.ReactNode; label: string }) {
  return (
    <button className="flex h-10 w-[152px] shrink-0 items-center gap-1 border-b-2 border-[#8fcaf5] pl-[6px] whitespace-nowrap">
      {icon}
      {label}
    </button>
  )
}

function Taskbar() {
  return (
    <footer className="flex h-[81px] shrink-0 bg-[#101010] font-normal text-white">
      <div className="flex w-[103px] shrink-0 items-center gap-8 pl-4">
        <button aria-label="Start">
          <Svg><path d="M0 2.300L6.700 1.400v6.200H0zM7.500 1.300L16 0v7.600H7.500zM0 8.400h6.700v6.200L0 13.700zM7.500 8.400H16V16l-8.500-1.300z" fill="#fff" /></Svg>
        </button>
        <button aria-label="Task view">
          <Svg>
            <path d="M.5 4.500h10v7H.5zM.5 0v2.500h10V0M.5 16v-2.500h10V16M14.500 0v3M14.500 7.500V16" fill="none" stroke="#fff" />
            <path d="M13 4h3v3h-3z" fill="#fff" />
          </Svg>
        </button>
      </div>
      <div className="flex flex-1 gap-[9px]">
        <Task icon={<Thunderbird />} label="Inbox - Local Folde..." />
        <Task icon={<TaskFolder />} label="Game5 WWII-Now" />
        <Task icon={<TaskFolder />} label="WITE2" />
        <Task icon={<Opus size={24} />} label="Administrator" />
        <Task icon={<Firefox />} label="Matrix Games Foru..." />
        <div className="flex h-[38px] w-16 items-center gap-3 pl-[2px]">
          <button aria-label="Chrome"><Chrome /></button>
          <button aria-label="Internet Explorer"><Explorer /></button>
        </div>
        <Task icon={<Foxit />} label="Living manual 1.06...." />
      </div>
      <div className="flex w-[78px] flex-col items-end text-[#dcdcdc]">
        <Svg className="mt-1" size={10}>
          <path d="M1 1.500L4 4.500 1 7.500M5 1.500L8 4.500 5 7.500" fill="none" stroke="#fff" strokeWidth="1.500" />
        </Svg>
        <span className="mt-[18px] w-full text-center">Desktop</span>
      </div>
      <button aria-label="Show hidden icons" className="flex w-[30px] items-center justify-center">
        <Svg size={12}><path d="M.5 9L6 3.500 11.500 9" fill="none" stroke="#eee" strokeWidth="1.500" /></Svg>
      </button>
      <div className="grid h-[81px] w-[96px] grid-cols-4 grid-rows-2 items-center justify-items-start">
        <Svg>
          <rect x="1" y="1" width="14" height="14" rx="2" fill="#4b8099" stroke="#c6d0d6" strokeWidth="2" />
          <path d="M4 4l8 8M4 12l3-3" stroke="#e4eef2" strokeWidth="1.500" />
        </Svg>
        <Svg>
          <circle cx="7" cy="8" r="5.500" fill="none" stroke="#f3b51d" strokeWidth="2" />
          <path d="M4 7l3 3 6-9" fill="none" stroke="#eee" strokeWidth="1.500" />
          <circle cx="11" cy="11" r="4.500" fill="#1f9a3c" />
          <path d="M9 11l1.500 2 3-3.500" fill="none" stroke="#fff" strokeWidth="1.500" />
        </Svg>
        <Svg><path d="M2 2h13v13H2z" fill="#008000" stroke="#0d4d0d" /></Svg>
        <span className="font-bold text-[#ff0000]">36</span>
        <Svg>
          <path d="M7 2.500H2.500v5H6v6H1.500M14.500 2.500v4.500M14.500 9v5" fill="none" stroke="#8bea00" strokeWidth="1.500" />
        </Svg>
        <Svg>
          <rect x="2" width="12" height="16" rx="6" fill="#0a84ff" />
          <path d="M5 5l6 6-3 2.500v-11L11 5l-6 6" fill="none" stroke="#fff" />
        </Svg>
        <Svg>
          <path d="M8 2C-1 2-1 14 7 14.500" fill="none" stroke="#00b8fc" strokeWidth="3" />
          <path d="M8 7h8v8h-3v-5H8z" fill="#00b8fc" />
        </Svg>
      </div>
      <span className="flex w-[25px] items-center justify-end">ENG</span>
      <div className="flex w-[88px] flex-col items-center justify-center leading-[22px]">
        <span>5:21 PM</span>
        <span>Tuesday</span>
        <span>10/5/2021</span>
      </div>
      <button aria-label="Notifications" className="flex w-[41px] items-center pl-1">
        <Svg size={17}>
          <path d="M0 1h16v12h-3l-2 3v-3H0z" fill="#fff" />
          <path d="M3 4.500h10M3 7.500h10M3 10.500h6" stroke="#101010" />
        </Svg>
      </button>
    </footer>
  )
}

export default function App() {
  return (
    <div className="flex h-screen flex-col overflow-hidden bg-white font-['Open_Sans','Noto_Sans',sans-serif] text-[12px] leading-4 font-semibold">
      <header className="flex h-[38px] shrink-0 items-center justify-center font-['Liberation_Sans',Arial,sans-serif] text-[16px] font-bold text-[#ff0000]">
        MK1-WIN10-64 10/05/21 17:21:01
      </header>
      <div className="flex min-h-0 flex-1 bg-[#dedee0] pb-[7px]">
        <div className="flex w-[7px] shrink-0 flex-col">
          <div className="h-[121px] bg-[#e9eaee]" />
          <div className="flex-1 bg-[#cfcfcf]" />
        </div>
        <main className="z-10 flex min-w-0 flex-1 flex-col border border-[#777] bg-[#f6f6f9] shadow-[0_2px_8px_rgba(0,0,0,0.55)]">
          <TitleBar />
          <MenuBar />
          <ToolBar />
          <div className="flex min-h-0 flex-1">
            <FolderTree />
            <section className="ml-[3px] flex min-w-0 flex-1 flex-col border-l border-[#8c8c8c]">
              <Tabs />
              <PathBar />
              <FileList />
              <StatusBar />
            </section>
          </div>
        </main>
        <div className="flex w-[7px] shrink-0 flex-col">
          <div className="h-[27px] bg-[#f4f4f7]" />
          <div className="h-[370px] bg-[#cacace]" />
          <div className="flex-1 bg-[#ececec]" />
        </div>
      </div>
      <Taskbar />
    </div>
  )
}
